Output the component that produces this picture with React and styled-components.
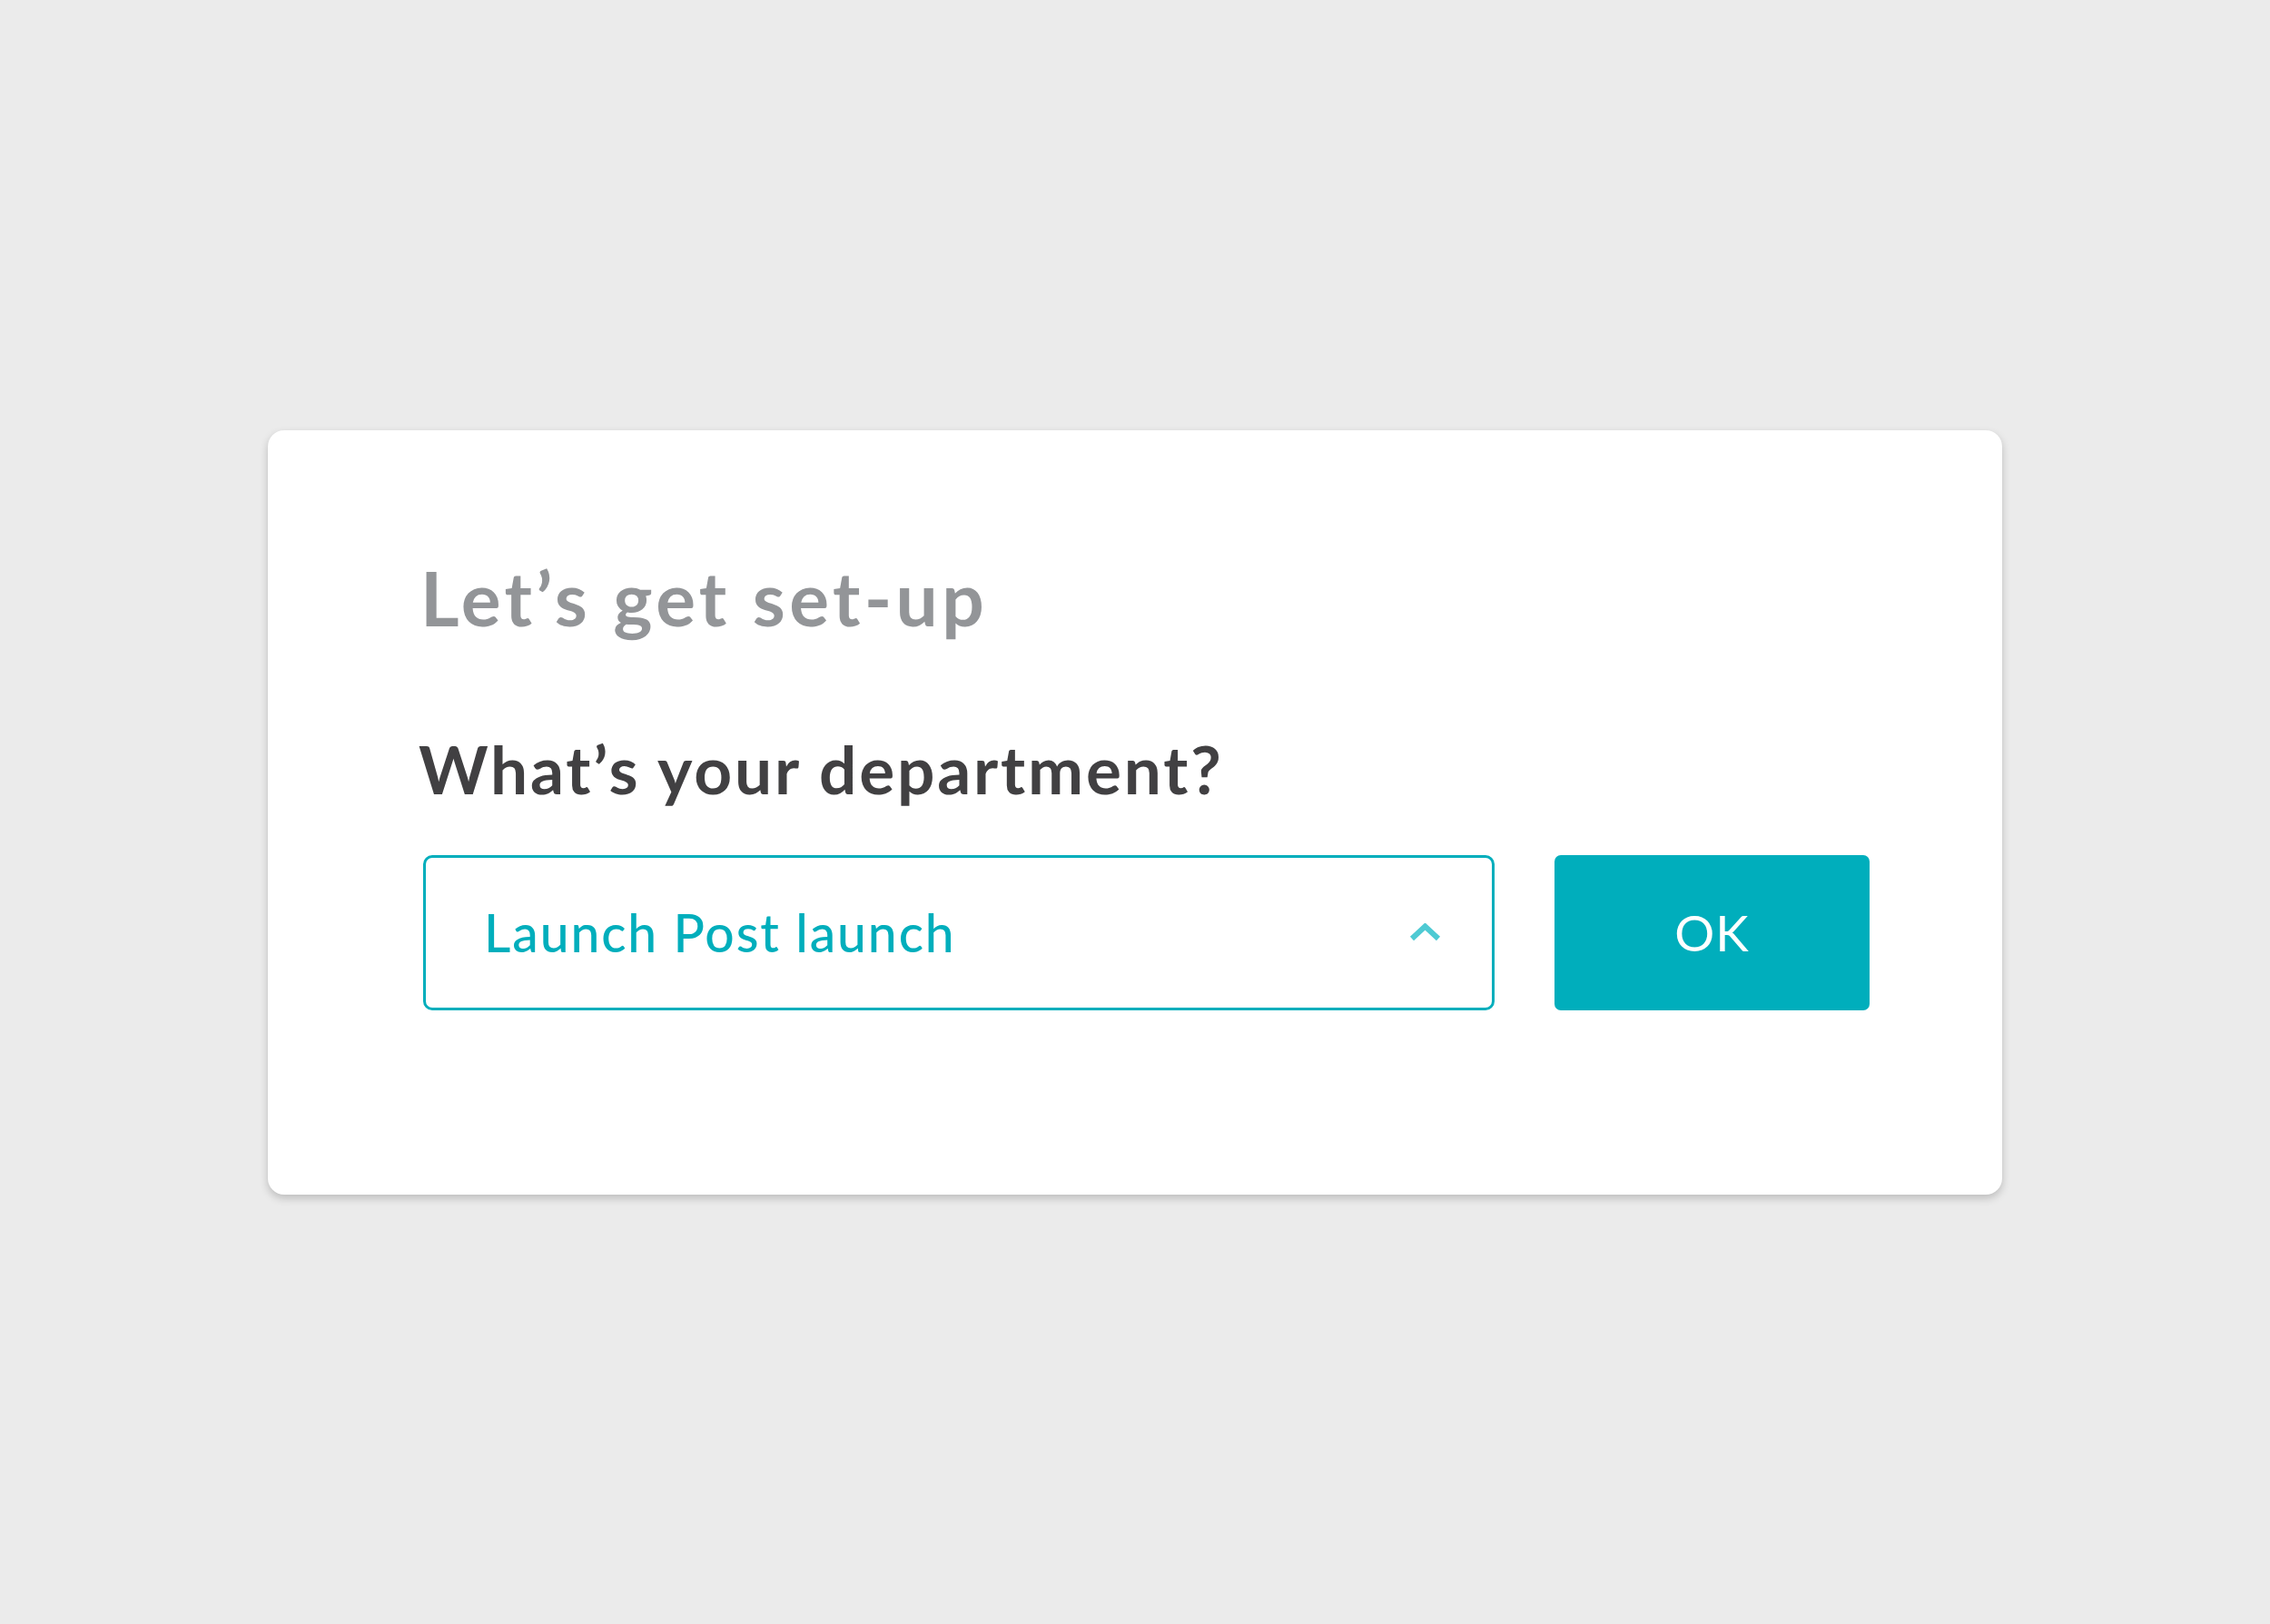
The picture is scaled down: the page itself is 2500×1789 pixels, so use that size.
import React from 'react';
import styled, { createGlobalStyle } from 'styled-components';

const GlobalStyle = createGlobalStyle`
  html, body {
    margin: 0;
    padding: 0;
    background: #ebebeb;
  }

  body {
    font-family: Lato, 'Noto Sans', sans-serif;
  }
`;

const Page = styled('div')`
  height: 100vh;
  display: flex;
  align-items: center;
  justify-content: center;
`;

const Card = styled('div')`
  box-sizing: border-box;
  width: 1910px;
  height: 842px;
  padding: 143px 146px 0 168px;
  background: #fff;
  border-radius: 18px;
  box-shadow: 0 4px 10px rgba(0, 0, 0, 0.2);
  display: flex;
  flex-direction: column;
`;

const Title = styled('h1')`
  margin: 0;
  font-size: 82px;
  line-height: 1;
  font-weight: 700;
  letter-spacing: 4.3px;
  color: #939598;
`;

const Question = styled('h2')`
  margin: 112px 0 0 -2px;
  font-size: 73px;
  line-height: 1;
  font-weight: 700;
  letter-spacing: 2.8px;
  color: #414042;
`;

const Row = styled('div')`
  margin: 58px 0 0 3px;
  height: 171px;
  display: flex;
  align-items: center;
  gap: 66px;
`;

const Select = styled('div')`
  box-sizing: border-box;
  flex: none;
  width: 1180px;
  height: 171px;
  padding: 0 56px 0 64px;
  border: 3px solid #00aebc;
  border-radius: 10px;
  display: flex;
  align-items: center;
  justify-content: space-between;
  font-size: 57px;
  font-weight: 500;
  letter-spacing: 1.9px;
  color: #00aebc;
  cursor: pointer;
`;

const Chevron = styled('svg')`
  width: 35px;
  height: 20px;
  flex: none;
`;

const OkButton = styled('button')`
  box-sizing: border-box;
  flex: none;
  width: 347px;
  height: 171px;
  padding: 0;
  border: none;
  border-radius: 7px;
  background: #00aebc;
  color: #fff;
  font-family: Lato, 'Noto Sans', sans-serif;
  font-size: 55px;
  font-weight: 400;
  letter-spacing: 1px;
  cursor: pointer;
`;

export default function App() {
  return (
    <>
      <GlobalStyle />
      <Page>
        <Card>
          <Title>Let’s get set-up</Title>
          <Question>What’s your department?</Question>
          <Row>
            <Select>
              <span>Launch Post launch</span>
              <Chevron viewBox="0 0 35 20">
                <polyline points="3,17 17.5,3.5 32,17" fill="none" stroke="#4ecad3" strokeWidth="6" />
              </Chevron>
            </Select>
            <OkButton>OK</OkButton>
          </Row>
        </Card>
      </Page>
    </>
  );
}
